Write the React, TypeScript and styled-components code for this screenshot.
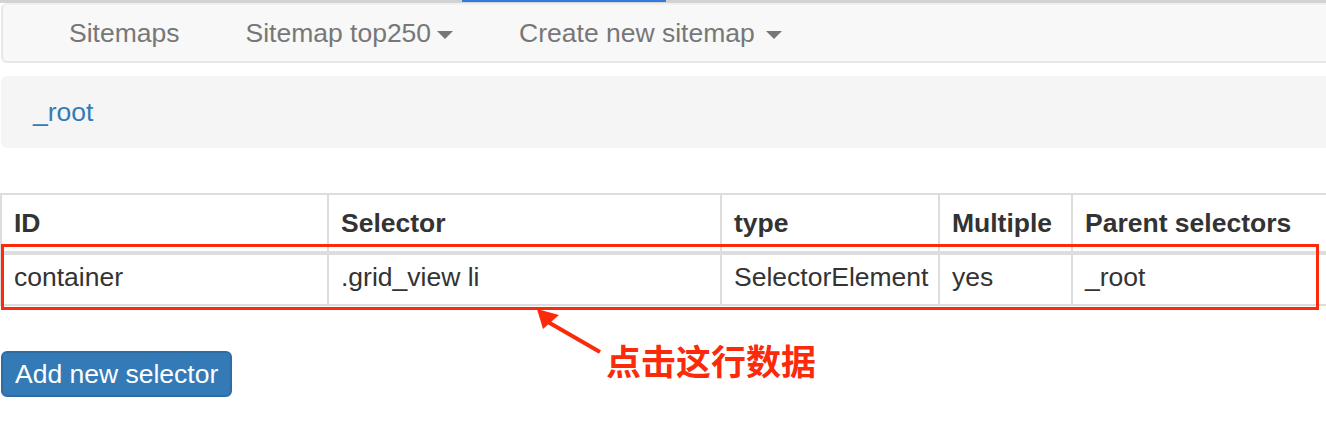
import React from 'react';
import styled, { createGlobalStyle } from 'styled-components';

const GlobalStyle = createGlobalStyle`
  html, body {
    margin: 0;
    padding: 0;
    background: #ffffff;
    overflow: hidden;
  }
  body {
    font-family: "Liberation Sans", Arial, sans-serif;
    color: #333333;
  }
`;

const Page = styled.div`
  width: 1326px;
  height: 424px;
  overflow: hidden;
`;

const TopStrip = styled.div`
  height: 3px;
  background: #d2d2d2;
`;

const ActiveMark = styled.div`
  margin-left: 462px;
  width: 204px;
  height: 2px;
  background: #2f7be0;
`;

const Navbar = styled.nav`
  display: flex;
  align-items: center;
  gap: 66px;
  height: 56px;
  margin: 0 -20px 0 1px;
  padding-left: 66px;
  background: #f8f8f8;
  border: 2px solid #e7e7e7;
  border-top-color: #f0f0f0;
  border-radius: 6px;
`;

const NavItem = styled.span<{ $caretGap?: number }>`
  display: flex;
  align-items: center;
  gap: ${(p) => p.$caretGap ?? 0}px;
  font-size: 26.5px;
  color: #777777;
`;

const Caret = styled.span`
  width: 0;
  height: 0;
  margin-top: 3px;
  border-left: 8px solid transparent;
  border-right: 8px solid transparent;
  border-top: 8px solid #777777;
`;

const Breadcrumb = styled.div`
  display: flex;
  align-items: center;
  height: 72px;
  margin: 13px -20px 0 1px;
  padding-left: 32px;
  background: #f5f5f5;
  border-radius: 6px;
`;

const CrumbLink = styled.a`
  font-size: 26.5px;
  color: #337ab7;
  text-decoration: none;
`;

const Section = styled.div`
  position: relative;
  margin-top: 45px;
`;

const Table = styled.table`
  width: 1346px;
  table-layout: fixed;
  border-collapse: collapse;
  font-size: 26.5px;
`;

const Th = styled.th<{ $w: number }>`
  box-sizing: border-box;
  width: ${(p) => p.$w}px;
  height: 59px;
  padding: 0 12px;
  text-align: left;
  font-weight: bold;
  white-space: nowrap;
  color: #333333;
  border: 2px solid #dddddd;
  border-bottom: 4px solid #dddddd;
`;

const Td = styled.td`
  height: 45px;
  padding: 0 12px 4px;
  white-space: nowrap;
  color: #333333;
  border: 2px solid #dddddd;
`;

const AddButton = styled.button`
  display: block;
  height: 46px;
  margin: 45px 0 0 1px;
  padding: 0 12px;
  font-family: "Liberation Sans", Arial, sans-serif;
  font-size: 26.5px;
  color: #ffffff;
  background: #337ab7;
  border: 2px solid #2e6da4;
  border-radius: 6px;
`;

const Highlight = styled.div`
  position: absolute;
  left: 1px;
  top: 51px;
  width: 1312px;
  height: 60px;
  border: 3.5px solid #fa2a0a;
  pointer-events: none;
`;

const Arrow = styled.svg`
  position: absolute;
  left: 530px;
  top: 115px;
`;

const Note = styled.div`
  position: absolute;
  left: 606px;
  top: 145px;
  font-family: "Noto Sans CJK SC", "Liberation Sans", sans-serif;
  font-size: 35px;
  font-weight: bold;
  line-height: 44px;
  color: #fa2a0a;
`;

const columns = [
  { label: 'ID', w: 327 },
  { label: 'Selector', w: 393 },
  { label: 'type', w: 218 },
  { label: 'Multiple', w: 133 },
  { label: 'Parent selectors', w: 275 },
];

const row = ['container', '.grid_view li', 'SelectorElement', 'yes', '_root'];

const App = (): JSX.Element => (
  <>
    <GlobalStyle />
    <Page>
      <TopStrip>
        <ActiveMark />
      </TopStrip>
      <Navbar>
        <NavItem>Sitemaps</NavItem>
        <NavItem $caretGap={6}>
          Sitemap top250
          <Caret />
        </NavItem>
        <NavItem $caretGap={11}>
          Create new sitemap
          <Caret />
        </NavItem>
      </Navbar>
      <Breadcrumb>
        <CrumbLink href="#">_root</CrumbLink>
      </Breadcrumb>
      <Section>
        <Table>
          <thead>
            <tr>
              {columns.map((c) => (
                <Th key={c.label} $w={c.w}>
                  {c.label}
                </Th>
              ))}
            </tr>
          </thead>
          <tbody>
            <tr>
              {row.map((cell, i) => (
                <Td key={i}>{cell}</Td>
              ))}
            </tr>
          </tbody>
        </Table>
        <AddButton>Add new selector</AddButton>
        <Highlight />
        <Arrow width="80" height="60" viewBox="0 0 80 60">
          <line x1="18" y1="14" x2="70" y2="44" stroke="#fa2a0a" strokeWidth="4" />
          <polygon points="7,1 13,21 29,7" fill="#fa2a0a" />
        </Arrow>
        <Note>点击这行数据</Note>
      </Section>
    </Page>
  </>
);

export default App;
